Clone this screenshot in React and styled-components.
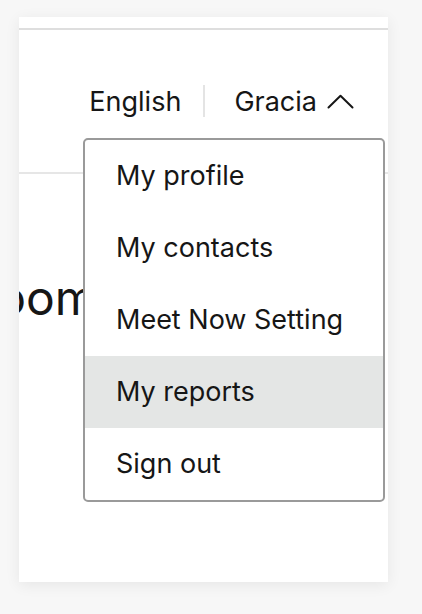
import React from "react";
import styled, { createGlobalStyle } from "styled-components";

const GlobalStyle = createGlobalStyle`
  body {
    margin: 0;
    background: #f7f7f7;
    font-family: Inter, "Liberation Sans", Arial, sans-serif;
    color: #161616;
  }
`;

const Page = styled.div`
  height: 614px;
  padding: 17px 0 0 19px;
  box-sizing: border-box;
`;

const Card = styled.div`
  width: 369px;
  height: 565px;
  padding-top: 11px;
  box-sizing: border-box;
  background: #fff;
  box-shadow: 0 3px 14px rgba(0, 0, 0, 0.07);
  overflow: hidden;
`;

const TopRule = styled.div`
  height: 2px;
  background: #dedede;
`;

const Header = styled.header`
  position: relative;
  height: 142px;
  display: flex;
  align-items: center;
  justify-content: flex-end;
  padding-right: 34px;
  border-bottom: 2px solid #e6e6e6;
`;

const Label = styled.span`
  font-size: 27px;
`;

const Divider = styled.span`
  width: 2px;
  height: 32px;
  margin: 0 29px 0 22px;
  background: #e4e4e4;
`;

const UserButton = styled.div`
  display: flex;
  align-items: center;
  gap: 10px;
  font-size: 27px;
`;

const Menu = styled.ul`
  position: absolute;
  top: 108px;
  left: 64px;
  width: 302px;
  margin: 0;
  padding: 0;
  list-style: none;
  box-sizing: border-box;
  border: 2px solid #9a9a9a;
  border-radius: 5px;
  background: #fff;
  overflow: hidden;
  z-index: 2;
`;

const MenuItem = styled.li`
  height: 72px;
  line-height: 72px;
  padding-left: 31px;
  font-size: 27px;
  white-space: nowrap;
  background: ${(p) => (p.$active ? "#e4e6e5" : "transparent")};
`;

const Body = styled.div`
  padding-top: 100px;
`;

const Title = styled.h1`
  margin: 0 0 0 -52px;
  font-size: 48px;
  font-weight: 400;
  line-height: 48px;
  white-space: nowrap;
`;

const ChevronUp = () => (
  <svg width="27" height="15" viewBox="0 0 27 15" fill="none">
    <polyline
      points="1.5,13.5 13.5,1.8 25.5,13.5"
      stroke="#161616"
      strokeWidth="2"
      strokeLinecap="round"
      strokeLinejoin="round"
    />
  </svg>
);

const items = ["My profile", "My contacts", "Meet Now Setting", "My reports", "Sign out"];

export default function App() {
  return (
    <>
      <GlobalStyle />
      <Page>
        <Card>
          <TopRule />
          <Header>
            <Label>English</Label>
            <Divider />
            <UserButton>
              Gracia
              <ChevronUp />
            </UserButton>
            <Menu>
              {items.map((item) => (
                <MenuItem key={item} $active={item === "My reports"}>
                  {item}
                </MenuItem>
              ))}
            </Menu>
          </Header>
          <Body>
            <Title>Room</Title>
          </Body>
        </Card>
      </Page>
    </>
  );
}
